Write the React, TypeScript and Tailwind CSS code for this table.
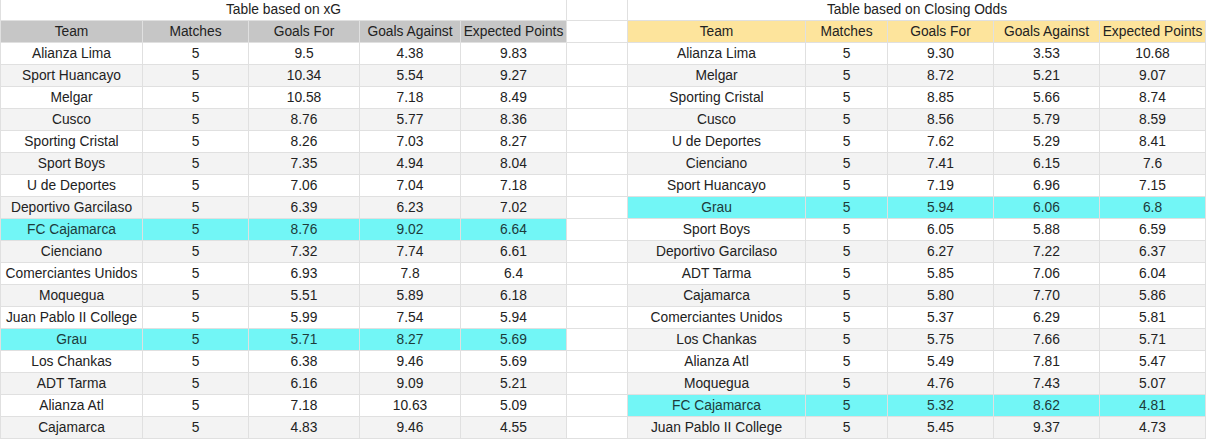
import React from "react";

type Row = [string, string, string, string, string, boolean?];

const left: Row[] = [
  ["Alianza Lima", "5", "9.5", "4.38", "9.83"],
  ["Sport Huancayo", "5", "10.34", "5.54", "9.27"],
  ["Melgar", "5", "10.58", "7.18", "8.49"],
  ["Cusco", "5", "8.76", "5.77", "8.36"],
  ["Sporting Cristal", "5", "8.26", "7.03", "8.27"],
  ["Sport Boys", "5", "7.35", "4.94", "8.04"],
  ["U de Deportes", "5", "7.06", "7.04", "7.18"],
  ["Deportivo Garcilaso", "5", "6.39", "6.23", "7.02"],
  ["FC Cajamarca", "5", "8.76", "9.02", "6.64", true],
  ["Cienciano", "5", "7.32", "7.74", "6.61"],
  ["Comerciantes Unidos", "5", "6.93", "7.8", "6.4"],
  ["Moquegua", "5", "5.51", "5.89", "6.18"],
  ["Juan Pablo II College", "5", "5.99", "7.54", "5.94"],
  ["Grau", "5", "5.71", "8.27", "5.69", true],
  ["Los Chankas", "5", "6.38", "9.46", "5.69"],
  ["ADT Tarma", "5", "6.16", "9.09", "5.21"],
  ["Alianza Atl", "5", "7.18", "10.63", "5.09"],
  ["Cajamarca", "5", "4.83", "9.46", "4.55"],
];

const right: Row[] = [
  ["Alianza Lima", "5", "9.30", "3.53", "10.68"],
  ["Melgar", "5", "8.72", "5.21", "9.07"],
  ["Sporting Cristal", "5", "8.85", "5.66", "8.74"],
  ["Cusco", "5", "8.56", "5.79", "8.59"],
  ["U de Deportes", "5", "7.62", "5.29", "8.41"],
  ["Cienciano", "5", "7.41", "6.15", "7.6"],
  ["Sport Huancayo", "5", "7.19", "6.96", "7.15"],
  ["Grau", "5", "5.94", "6.06", "6.8", true],
  ["Sport Boys", "5", "6.05", "5.88", "6.59"],
  ["Deportivo Garcilaso", "5", "6.27", "7.22", "6.37"],
  ["ADT Tarma", "5", "5.85", "7.06", "6.04"],
  ["Cajamarca", "5", "5.80", "7.70", "5.86"],
  ["Comerciantes Unidos", "5", "5.37", "6.29", "5.81"],
  ["Los Chankas", "5", "5.75", "7.66", "5.71"],
  ["Alianza Atl", "5", "5.49", "7.81", "5.47"],
  ["Moquegua", "5", "4.76", "7.43", "5.07"],
  ["FC Cajamarca", "5", "5.32", "8.62", "4.81", true],
  ["Juan Pablo II College", "5", "5.45", "9.37", "4.73"],
];

const headers = ["Team", "Matches", "Goals For", "Goals Against", "Expected Points"];

const cell =
  "h-[22px] pt-[2px] flex items-center justify-center border-r border-b border-[#e0e0e0] whitespace-nowrap overflow-hidden";

function rowBg(r: Row, i: number) {
  if (r[5]) return "bg-[#72f6f6] text-[#1d3b3b]";
  return i % 2 === 1 ? "bg-[#f3f3f3]" : "bg-white";
}

export default function App() {
  return (
    <div
      className="w-[1206px] h-[441px] bg-white text-[13.8px] text-[#222222] overflow-hidden"
      style={{ fontFamily: '"Liberation Sans", Arial, sans-serif' }}
    >
      <div className="grid grid-cols-[143px_106px_111px_101px_106px_61px_178px_82px_106px_106px_106px]">
        {/* Title row */}
        <div className="col-span-5 h-[21px] flex items-center justify-center border-r border-b border-l border-[#e0e0e0]">
          Table based on xG
        </div>
        <div className="h-[21px] border-r border-b border-[#e0e0e0]" />
        <div className="col-span-5 h-[21px] flex items-center justify-center border-b border-[#e0e0e0]">
          Table based on Closing Odds
        </div>

        {/* Header row */}
        {headers.map((h, j) => (
          <div key={"lh" + j} className={`${cell} bg-[#c6c6c6] ${j === 0 ? "border-l" : ""}`}>
            {h}
          </div>
        ))}
        <div className={`${cell} bg-white`} />
        {headers.map((h, j) => (
          <div key={"rh" + j} className={`${cell} bg-[#fde49c]`}>
            {h}
          </div>
        ))}

        {/* Data rows */}
        {left.map((l, i) => {
          const r = right[i];
          return (
            <React.Fragment key={i}>
              {l.slice(0, 5).map((v, j) => (
                <div key={"l" + j} className={`${cell} ${rowBg(l, i)} ${j === 0 ? "border-l" : ""}`}>
                  {v as string}
                </div>
              ))}
              <div className={`${cell} bg-white`} />
              {r.slice(0, 5).map((v, j) => (
                <div key={"r" + j} className={`${cell} ${rowBg(r, i)}`}>
                  {v as string}
                </div>
              ))}
            </React.Fragment>
          );
        })}
      </div>
    </div>
  );
}
